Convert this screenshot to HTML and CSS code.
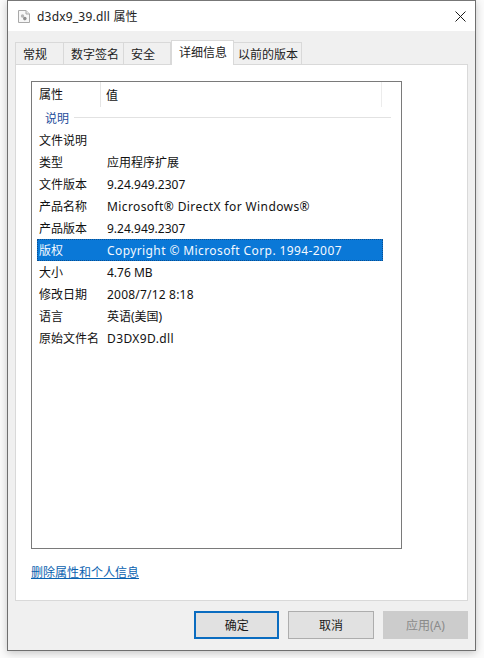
FILE: index.html
```html
<!DOCTYPE html>
<html lang="zh-CN">
<head>
  <meta charset="UTF-8" />
  <title>d3dx9_39.dll 属性</title>
  <link rel="stylesheet" href="styles.css">
</head>
<body>

  <div class="window">
    <div class="titlebar">
      <svg class="file-icon" width="12" height="13" viewBox="0 0 12 13">
        <path d="M.5 .5H8L11.5 4V12.5H.5Z" fill="#f7f7f7" stroke="#a9a9a9"/>
        <path d="M8 .5V4H11.5" fill="#e4e4e4" stroke="#a9a9a9"/>
        <circle cx="4.5" cy="6" r="1.7" fill="#b5b5b5"/>
        <circle cx="6.8" cy="8.6" r="1.8" fill="#8f8f8f"/>
      </svg>
      <span class="title">d3dx9_39.dll 属性</span>
      <svg class="close" width="11" height="11" viewBox="0 0 11 11">
        <path d="M.5 .5L10.5 10.5M10.5 .5L.5 10.5" stroke="#1a1a1a" stroke-width="1" fill="none"/>
      </svg>
    </div>

    <div class="content">
      <div class="tabs">
        <div class="tab tab-general">常规</div>
        <div class="tab tab-sign">数字签名</div>
        <div class="tab tab-security">安全</div>
        <div class="tab tab-details active">详细信息</div>
        <div class="tab tab-previous">以前的版本</div>
      </div>

      <div class="panel">
        <div class="listbox">
          <div class="list-head">
            <div class="head-name">属性</div>
            <div class="head-value">值</div>
          </div>
          <div class="group">
            <span>说明</span>
            <div class="group-line"></div>
          </div>
          <div class="row"><div class="name">文件说明</div><div class="value"></div></div>
          <div class="row"><div class="name">类型</div><div class="value">应用程序扩展</div></div>
          <div class="row"><div class="name">文件版本</div><div class="value">9.24.949.2307</div></div>
          <div class="row"><div class="name">产品名称</div><div class="value wide">Microsoft® DirectX for Windows®</div></div>
          <div class="row"><div class="name">产品版本</div><div class="value">9.24.949.2307</div></div>
          <div class="row selected"><div class="name">版权</div><div class="value wide">Copyright © Microsoft Corp. 1994-2007</div></div>
          <div class="row"><div class="name">大小</div><div class="value">4.76 MB</div></div>
          <div class="row"><div class="name">修改日期</div><div class="value date">2008/7/12 8:18</div></div>
          <div class="row"><div class="name">语言</div><div class="value">英语(美国)</div></div>
          <div class="row"><div class="name">原始文件名</div><div class="value wide">D3DX9D.dll</div></div>
        </div>
        <a class="remove-link" href="#">删除属性和个人信息</a>
      </div>

      <div class="buttons">
        <button class="btn default">确定</button>
        <button class="btn cancel">取消</button>
        <button class="btn disabled">应用(A)</button>
      </div>
    </div>
  </div>

</body>
</html>
```

FILE: styles.css
```css
* {
  box-sizing: border-box;
}

html, body {
  margin: 0;
  padding: 0;
  background: #fbfbfb;
  font-family: "Noto Sans", "Noto Sans CJK SC", sans-serif;
  font-size: 12px;
  color: #111;
  overflow: hidden;
}

body {
  height: 658px;
}

.window {
  margin-left: 7px;
  width: 469px;
  height: 651px;
  border: 1px solid #6f6f6f;
  border-top-color: #777;
  background: #f0f0f0;
  box-shadow: 0 2px 8px rgba(0, 0, 0, 0.22);
}

/* title bar */
.titlebar {
  height: 30px;
  background: #fff;
  display: flex;
  align-items: center;
  padding-left: 10px;
  padding-right: 9px;
}

.file-icon {
  margin-right: 7px;
}

.title {
  flex: 1;
  font-size: 12px;
  letter-spacing: 0.2px;
  color: #222;
}

.close {
  display: block;
}

/* tabs */
.content {
  padding: 9px 7px 0 7px;
}

.tabs {
  display: flex;
  height: 24px;
  align-items: flex-end;
}

.tab {
  height: 22px;
  background: #f0f0f0;
  border: 1px solid #d9d9d9;
  border-bottom: none;
  border-left: none;
  padding-top: 2px;
  padding-left: 7px;
  color: #222;
  white-space: nowrap;
}

.tab-general { width: 49px; border-left: 1px solid #d9d9d9; }
.tab-sign { width: 60px; }
.tab-security { width: 47px; }
.tab-previous { width: 68px; padding-left: 4px; }

.tab.active {
  width: 63px;
  height: 25px;
  padding-left: 7px;
  background: #fff;
  border-left: 1px solid #d9d9d9;
  position: relative;
  z-index: 1;
  margin-bottom: -1px;
}

/* main panel */
.panel {
  width: 453px;
  height: 537px;
  background: #fff;
  border: 1px solid #d9d9d9;
  padding: 16px 0 0 15px;
}

.listbox {
  width: 371px;
  height: 468px;
  border: 1px solid #7a7a7a;
  padding: 0 0 0 5px;
}

.list-head {
  display: flex;
  height: 25px;
  width: 345px;
  align-items: center;
  border-right: 1px solid #ececec;
}

.head-name {
  width: 64px;
  padding-left: 2px;
  height: 100%;
  line-height: 25px;
  border-right: 1px solid #e5e5e5;
}

.head-value {
  padding-left: 5px;
}

.group {
  display: flex;
  align-items: center;
  height: 22px;
  padding-left: 8px;
  padding-bottom: 1px;
  color: #1f4e9c;
}

.group-line {
  width: 317px;
  height: 1px;
  margin-left: 5px;
  background: #e2e2e2;
}

.row {
  display: flex;
  width: 346px;
  height: 22px;
  line-height: 23px;
  padding-left: 2px;
}

.name {
  width: 68px;
  flex-shrink: 0;
  white-space: nowrap;
}

.wide {
  letter-spacing: 0.4px;
}

.date {
  letter-spacing: 0.2px;
}

.selected {
  background: #0a78d7;
  color: #f4f9ff;
  outline: 1px dotted #0a4f91;
  outline-offset: -1px;
}

.remove-link {
  display: inline-block;
  margin-top: 14px;
  color: #0a62b0;
  font-size: 12px;
}

/* bottom buttons */
.buttons {
  display: flex;
  padding-top: 10px;
  padding-left: 179px;
  gap: 9px;
}

.btn {
  width: 86px;
  height: 28px;
  background: #e1e1e1;
  border: 1px solid #adadad;
  font: inherit;
  color: #1a1a1a;
  padding: 0;
}

.btn.default {
  border: 2px solid #0a6cc0;
}

.btn.disabled {
  background: #cccccc;
  border-color: #cccccc;
  color: #8a8a8a;
}
```
